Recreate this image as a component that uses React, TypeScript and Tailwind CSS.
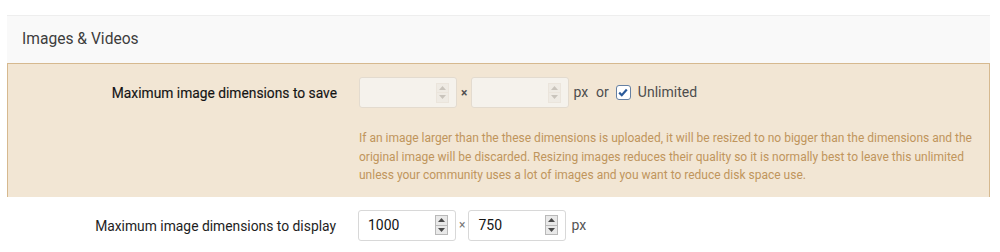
import React from 'react';

const Spinner: React.FC<{ disabled?: boolean }> = ({ disabled }) => (
  <div
    className={`flex flex-col w-[13px] h-[20px] border ${
      disabled ? 'border-[#ebe5dc] bg-[#efebe4]' : 'border-[#b9b9b9] bg-[#e9e9e9]'
    }`}
  >
    <div className={`flex-1 flex items-center justify-center border-b ${disabled ? 'border-[#ebe5dc]' : 'border-[#b9b9b9]'}`}>
      <svg width="7" height="4" viewBox="0 0 7 4">
        <path d="M3.5 0 L7 4 L0 4 Z" fill={disabled ? '#c9c4bc' : '#4a4a4a'} />
      </svg>
    </div>
    <div className="flex-1 flex items-center justify-center">
      <svg width="7" height="4" viewBox="0 0 7 4">
        <path d="M0 0 L7 0 L3.5 4 Z" fill={disabled ? '#c9c4bc' : '#4a4a4a'} />
      </svg>
    </div>
  </div>
);

const NumberBox: React.FC<{ value?: string; disabled?: boolean }> = ({ value, disabled }) => (
  <div
    className={`w-[98px] h-[31px] rounded-[3px] border flex items-center justify-between pl-[9px] pr-[7px] ${
      disabled ? 'bg-[#f5f2ec] border-[#e3dbcf]' : 'bg-white border-[#d8d8d8]'
    }`}
  >
    <span className="text-[14px] text-[#141414]">{value}</span>
    <Spinner disabled={disabled} />
  </div>
);

const Times: React.FC<{ dark?: boolean }> = ({ dark }) => (
  <span className={`text-[12px] ${dark ? 'px-[4px] text-[#505050] font-bold' : 'px-[3px] text-[#777]'}`}>×</span>
);

const App: React.FC = () => {
  return (
    <div
      className="w-[1000px] h-[252px] bg-white pt-[15px] pl-[7px] pr-[10px] overflow-hidden"
      style={{ fontFamily: 'Roboto, "Liberation Sans", sans-serif' }}
    >
      <div className="bg-[#f9f9f9] border-t border-[#eeeeee] h-[48px] flex items-center px-[15px]">
        <h2 className="text-[15.6px] text-[#3d3d3d]">Images &amp; Videos</h2>
      </div>

      <div className="bg-[#f2e6d4] border border-b-0 border-[#d6b98f] flex pt-[13px] pb-[12px]">
        <div className="w-[329px] shrink-0 text-right text-[13.8px] text-[#141414] [-webkit-text-stroke:0.15px_#141414] pt-[6px]">
          Maximum image dimensions to save
        </div>
        <div className="pl-[22px] flex-1 min-w-0 pr-[10px]">
          <div className="flex items-center text-[14px] text-[#4d4d4d]">
            <NumberBox disabled />
            <Times dark />
            <NumberBox disabled />
            <span className="ml-[4px]">px</span>
            <span className="ml-[8px]">or</span>
            <span className="ml-[7px] w-[15px] h-[15px] rounded-[3px] border-[1.5px] border-[#6580a3] bg-white flex items-center justify-center">
              <svg width="10" height="9" viewBox="0 0 10 9">
                <path d="M1.2 4.6 L3.8 7.2 L8.8 1.6" fill="none" stroke="#2a5a9a" strokeWidth="2.2" />
              </svg>
            </span>
            <span className="ml-[7px] -mt-[1px]">Unlimited</span>
          </div>
          <p className="mt-[21px] text-[12px] leading-[18.5px] text-[#c0955c]">
            If an image larger than the these dimensions is uploaded, it will be resized to no bigger than the dimensions and the
            original image will be discarded. Resizing images reduces their quality so it is normally best to leave this unlimited
            unless your community uses a lot of images and you want to reduce disk space use.
          </p>
        </div>
      </div>

      <div className="flex pt-[13px]">
        <div className="w-[329px] shrink-0 text-right text-[13.85px] text-[#1e1e1e] pt-[6px]">
          Maximum image dimensions to display
        </div>
        <div className="pl-[22px] flex items-center text-[14px] text-[#4d4d4d]">
          <NumberBox value="1000" />
          <Times />
          <NumberBox value="750" />
          <span className="ml-[5px] text-[#555]">px</span>
        </div>
      </div>
    </div>
  );
};

export default App;
